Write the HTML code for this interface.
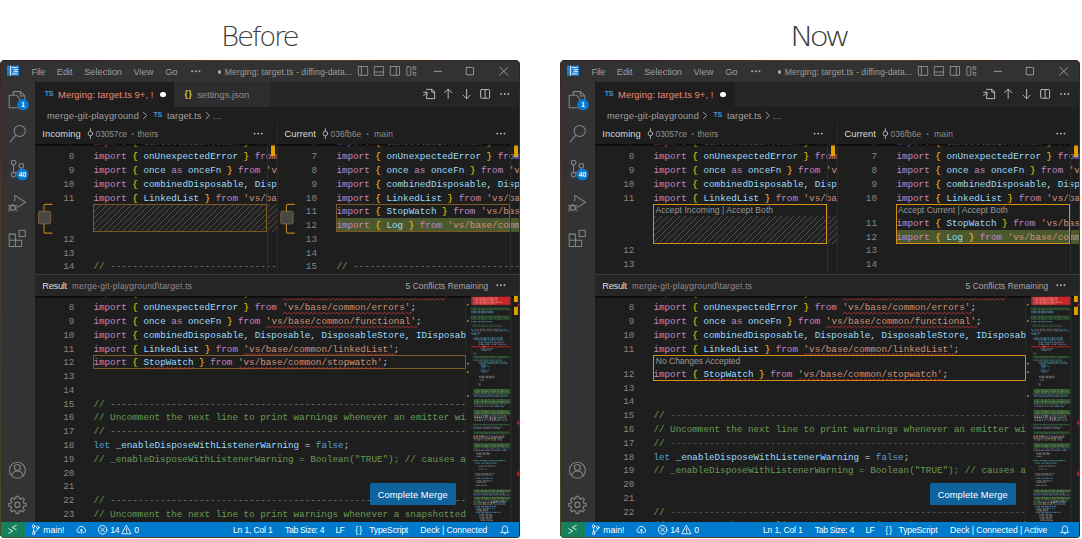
<!DOCTYPE html>
<html lang="en"><head><meta charset="utf-8"><title>Merge editor: Before / Now</title>
<style>
html,body{margin:0;padding:0}
body{width:1082px;height:539px;background:#fff;position:relative;overflow:hidden;font-family:"Liberation Sans",sans-serif}
.h{position:absolute;top:20.1px;line-height:34px;font-family:"DejaVu Sans Light","DejaVu Sans",sans-serif;font-weight:200;font-size:26.5px;color:#3c3c3c;transform-origin:0 50%;transform:scaleX(.86);white-space:pre}
.win{position:absolute;top:60.4px;width:519.6px;height:477.2px;background:#1e1e1e;overflow:hidden;border-radius:5px 5px 4px 4.5px}
.win div,.win svg{position:absolute}
.t{position:absolute;white-space:pre;line-height:14px}
.titlebar{left:0;top:0;width:100%;height:21.6px;background:#323233}
.actbar{left:0;top:21.6px;width:35px;height:441px;background:#333}
.tabsbar{left:35px;top:21.6px;right:0;height:25px;background:#252526}
.tab1{left:35px;top:21.6px;width:138.7px;height:25px;background:#1e1e1e}
.tab2{left:174.2px;top:21.6px;width:96px;height:25px;background:#2d2d2d}
.dot{width:5.6px;height:5.6px;border-radius:50%;background:#fff}
.pane{overflow:hidden}
.ln{left:0;width:100%;height:13.78px;line-height:13.78px;font-family:"Liberation Mono",monospace;font-size:9.282px;white-space:pre}
.ln b{position:absolute;left:0;top:0;text-align:right;color:#858585;font-weight:normal}
.ln pre{position:absolute;top:0;margin:0;font:inherit;color:#d4d4d4}
i{font-style:normal}
.k{color:#c586c0}.b{color:#ffd700}.v{color:#9cdcfe}.s{color:#ce9178}.p{color:#d4d4d4}.c{color:#6a9955}.l{color:#569cd6}.d{color:#5f8c4d}.now .d{color:#4c7040}
.hatch{background:repeating-linear-gradient(-45deg,#212121 0,#212121 3.4px,#4e4e4e 3.4px,#4e4e4e 4.24px);box-sizing:border-box}
.cbox{border:1px solid #d39014;box-sizing:border-box}
.cbox.dim{border-color:#7a5a22}
.olive{background:#4c592e}
.vline{width:1px;background:#303030}
.ymark{background:#e0a200}
.shadow{height:3px;background:linear-gradient(rgba(0,0,0,.8),rgba(0,0,0,.35) 50%,rgba(0,0,0,0))}
.reshead{left:35px;top:213.8px;right:0;height:21.6px;background:#252526;border-top:.8px solid #3c3c3c;box-sizing:border-box}
.btn{background:#0e639c;border-radius:1.5px}
.status{left:0;top:462px;width:100%;height:16px;background:#007acc}
.remote{left:0;top:462px;width:25.4px;height:16px;background:#16825d}
.edge-t{left:0;top:0;width:100%;height:.9px;background:linear-gradient(90deg,#2e1a18,#43241c 20%,#5e3a20 45%,#6e4a22 55%,#4b301c 75%,#2c2420)}
.edge-l{left:0;top:0;width:1.1px;height:100%;background:linear-gradient(#3a2420,#4e3a2a 30%,#45382c 60%,#4e462c)}
.edge-b{left:0;bottom:0;width:100%;height:.8px;background:linear-gradient(90deg,#5a4a2c,#4a3a24 40%,#5a4428 70%,#3a3024)}
.edge-r{right:0;top:0;width:.8px;height:100%;background:linear-gradient(#2c2420,#5a2c24 20%,#4a2a22 50%,#5a2420 75%,#3a2a22)}

</style></head><body>
<div class="h" style="left:221px;transform:scaleX(1.05);letter-spacing:-2.2px">Before</div>
<div class="h" style="left:790.2px;transform:scaleX(1.2);letter-spacing:-3.5px">Now</div>
<div class="win" style="left:0px"><div class="titlebar"></div><div class="actbar"></div><div class="tabsbar"></div><div class="tab1"></div><div class="tab2"></div><span class="t" style="left:31.50px;top:4.20px;font-size:9.3px;color:#9d9d9d;letter-spacing:-0.371px;">File</span><span class="t" style="left:56.80px;top:4.20px;font-size:9.3px;color:#9d9d9d;letter-spacing:-0.058px;">Edit</span><span class="t" style="left:84.20px;top:4.20px;font-size:9.3px;color:#9d9d9d;letter-spacing:-0.050px;">Selection</span><span class="t" style="left:133.60px;top:4.20px;font-size:9.3px;color:#9d9d9d;letter-spacing:-0.046px;">View</span><span class="t" style="left:165.20px;top:4.20px;font-size:9.3px;color:#9d9d9d;letter-spacing:-0.203px;">Go</span><div class="dot" style="left:218px;top:10.1px;width:3.4px;height:3.4px;background:#a6a6a6"></div><span class="t" style="left:224.80px;top:4.20px;font-size:8.6px;color:#9d9d9d;letter-spacing:0.096px;">Merging: target.ts - diffing-data...</span><span class="t" style="left:44.80px;top:26.70px;font-size:7px;color:#3d94d6;letter-spacing:-0.327px;font-weight:bold;">TS</span><span class="t" style="left:58.10px;top:27.30px;font-size:9.3px;color:#f48771;letter-spacing:0.084px;">Merging: target.ts 9+, !</span><div class="dot" style="left:160.3px;top:31.4px"></div><span class="t" style="left:184.60px;top:27.00px;font-size:8.5px;color:#cbcb41;letter-spacing:0.688px;font-weight:bold;">{}</span><span class="t" style="left:197.20px;top:27.30px;font-size:9.3px;color:#8f8f8f;letter-spacing:0.024px;">settings.json</span><span class="t" style="left:46.90px;top:48.40px;font-size:9.3px;color:#a0a0a0;letter-spacing:0.191px;">merge-git-playground</span><span class="t" style="left:153.60px;top:47.70px;font-size:7px;color:#3d94d6;letter-spacing:-0.327px;font-weight:bold;">TS</span><span class="t" style="left:167.00px;top:48.40px;font-size:9.3px;color:#a0a0a0;letter-spacing:0.101px;">target.ts</span><span class="t" style="left:212.80px;top:48.40px;font-size:9.3px;color:#a0a0a0;letter-spacing:-3.297px;">…</span><span class="t" style="left:42.30px;top:66.80px;font-size:9.3px;color:#dcdcdc;letter-spacing:0.108px;">Incoming</span><span class="t" style="left:95.60px;top:66.80px;font-size:8.4px;color:#8e8e8e;letter-spacing:-0.092px;">03057ce</span><span class="t" style="left:131.50px;top:66.80px;font-size:7px;color:#6e6e6e;">•</span><span class="t" style="left:137.40px;top:66.80px;font-size:8.4px;color:#8e8e8e;letter-spacing:0.086px;">theirs</span><span class="t" style="left:284.50px;top:66.80px;font-size:9.3px;color:#dcdcdc;letter-spacing:0.069px;">Current</span><span class="t" style="left:330.60px;top:66.80px;font-size:8.4px;color:#8e8e8e;letter-spacing:0.031px;">036fb6e</span><span class="t" style="left:366.30px;top:66.80px;font-size:7px;color:#6e6e6e;">•</span><span class="t" style="left:374.20px;top:66.80px;font-size:8.4px;color:#8e8e8e;letter-spacing:0.211px;">main</span><div class="pane" style="left:35px;top:83.2px;width:242.5px;height:130.7px"><div class="hatch" style="left:58px;top:60.83px;width:190px;height:27.56px"></div><div class="cbox dim" style="left:58px;top:60.83px;width:174.4px;height:27.56px"></div><div class="ln" style="top:-7.15px"><b style="width:39.40px">7</b><pre style="left:58.40px"><i class="k">import</i> <i class="b">{</i> <i class="v">CancellationToken</i> <i class="b">}</i> <i class="k">from</i> <i class="s">'vs/base/common/cancellation'</i><i class="p">;</i></pre></div><div class="ln" style="top:6.63px"><b style="width:39.40px">8</b><pre style="left:58.40px"><i class="k">import</i> <i class="b">{</i> <i class="v">onUnexpectedError</i> <i class="b">}</i> <i class="k">from</i> <i class="s">'vs/base/common/errors'</i><i class="p">;</i></pre></div><div class="ln" style="top:20.41px"><b style="width:39.40px">9</b><pre style="left:58.40px"><i class="k">import</i> <i class="b">{</i> <i class="v">once</i> <i class="k">as</i> <i class="v">onceFn</i> <i class="b">}</i> <i class="k">from</i> <i class="s">'vs/base/common/functional'</i><i class="p">;</i></pre></div><div class="ln" style="top:34.19px"><b style="width:39.40px">10</b><pre style="left:58.40px"><i class="k">import</i> <i class="b">{</i> <i class="v">combinedDisposable</i><i class="p">,</i> <i class="v">Disposable</i><i class="p">,</i> <i class="v">DisposableStore</i> <i class="b">}</i> <i class="k">from</i> <i class="s">'vs/base/common/lifecycle'</i><i class="p">;</i></pre></div><div class="ln" style="top:47.97px"><b style="width:39.40px">11</b><pre style="left:58.40px"><i class="k">import</i> <i class="b">{</i> <i class="v">LinkedList</i> <i class="b">}</i> <i class="k">from</i> <i class="s">'vs/base/common/linkedList'</i><i class="p">;</i></pre></div><div class="ln" style="top:89.31px"><b style="width:39.40px">12</b><pre style="left:58.40px"></pre></div><div class="ln" style="top:103.09px"><b style="width:39.40px">13</b><pre style="left:58.40px"></pre></div><div class="ln" style="top:116.87px"><b style="width:39.40px">14</b><pre style="left:58.40px"><i class="c">// </i><i class="d">----------------------------------------------------------------------------------------------------</i></pre></div></div><div class="pane" style="left:277.7px;top:83.2px;width:242px;height:130.7px"><div class="olive" style="left:58.3px;top:74.61px;width:190px;height:13.78px"></div><div class="cbox dim" style="left:58.3px;top:60.83px;width:174.5px;height:27.56px"></div><div class="ln" style="top:-7.15px"><b style="width:39.30px">6</b><pre style="left:58.70px"><i class="k">import</i> <i class="b">{</i> <i class="v">CancellationToken</i> <i class="b">}</i> <i class="k">from</i> <i class="s">'vs/base/common/cancellation'</i><i class="p">;</i></pre></div><div class="ln" style="top:6.63px"><b style="width:39.30px">7</b><pre style="left:58.70px"><i class="k">import</i> <i class="b">{</i> <i class="v">onUnexpectedError</i> <i class="b">}</i> <i class="k">from</i> <i class="s">'vs/base/common/errors'</i><i class="p">;</i></pre></div><div class="ln" style="top:20.41px"><b style="width:39.30px">8</b><pre style="left:58.70px"><i class="k">import</i> <i class="b">{</i> <i class="v">once</i> <i class="k">as</i> <i class="v">onceFn</i> <i class="b">}</i> <i class="k">from</i> <i class="s">'vs/base/common/functional'</i><i class="p">;</i></pre></div><div class="ln" style="top:34.19px"><b style="width:39.30px">9</b><pre style="left:58.70px"><i class="k">import</i> <i class="b">{</i> <i class="v">combinedDisposable</i><i class="p">,</i> <i class="v">Disposable</i><i class="p">,</i> <i class="v">DisposableStore</i> <i class="b">}</i> <i class="k">from</i> <i class="s">'vs/base/common/lifecycle'</i><i class="p">;</i></pre></div><div class="ln" style="top:47.97px"><b style="width:39.30px">10</b><pre style="left:58.70px"><i class="k">import</i> <i class="b">{</i> <i class="v">LinkedList</i> <i class="b">}</i> <i class="k">from</i> <i class="s">'vs/base/common/linkedList'</i><i class="p">;</i></pre></div><div class="ln" style="top:61.75px"><b style="width:39.30px">11</b><pre style="left:58.70px"><i class="k">import</i> <i class="b">{</i> <i class="v">StopWatch</i> <i class="b">}</i> <i class="k">from</i> <i class="s">'vs/base/common/stopwatch'</i><i class="p">;</i></pre></div><div class="ln" style="top:75.53px"><b style="width:39.30px">12</b><pre style="left:58.70px"><i class="k">import</i> <i class="b">{</i> <i class="v">Log</i> <i class="b">}</i> <i class="k">from</i> <i class="s">'vs/base/common/log'</i><i class="p">;</i></pre></div><div class="ln" style="top:89.31px"><b style="width:39.30px">13</b><pre style="left:58.70px"></pre></div><div class="ln" style="top:103.09px"><b style="width:39.30px">14</b><pre style="left:58.70px"></pre></div><div class="ln" style="top:116.87px"><b style="width:39.30px">15</b><pre style="left:58.70px"><i class="c">// </i><i class="d">----------------------------------------------------------------------------------------------------</i></pre></div></div><div class="vline" style="left:267.2px;top:83.2px;height:130.7px;background:#2d2d2d"></div><div class="vline" style="left:510.4px;top:83.2px;height:130.7px;background:#2d2d2d"></div><div class="vline" style="left:465.4px;top:235.3px;height:226.7px;background:#292929"></div><div class="vline" style="left:277.2px;top:62.8px;height:151.1px;background:#2b2b2b"></div><div class="ymark" style="left:270.6px;top:84.2px;width:4.6px;height:11.3px"></div><div class="ymark" style="left:514px;top:84.2px;width:4.4px;height:12px"></div><div class="shadow" style="left:35px;top:83.2px;width:485px;height:3.5px"></div><div class="reshead"></div><span class="t" style="left:42.30px;top:218.30px;font-size:9.3px;color:#dcdcdc;letter-spacing:-0.293px;">Result</span><span class="t" style="left:72.00px;top:218.30px;font-size:8.4px;color:#8e8e8e;letter-spacing:0.270px;">merge-git-playground\target.ts</span><span class="t" style="left:405.60px;top:218.30px;font-size:8.4px;color:#a6a6a6;letter-spacing:0.059px;">5 Conflicts Remaining</span><div class="pane" style="left:35px;top:235.3px;width:430.5px;height:226.7px"><div class="cbox dim" style="left:58px;top:59.68px;width:372.6px;height:13.78px"></div><div class="ln" style="top:-8.30px"><b style="width:39.40px">7</b><pre style="left:58.40px"><i class="k">import</i> <i class="b">{</i> <i class="v">CancellationToken</i> <i class="b">}</i> <i class="k">from</i> <i class="s">'vs/base/common/cancellation'</i><i class="p">;</i></pre></div><div class="ln" style="top:5.48px"><b style="width:39.40px">8</b><pre style="left:58.40px"><i class="k">import</i> <i class="b">{</i> <i class="v">onUnexpectedError</i> <i class="b">}</i> <i class="k">from</i> <i class="s">'vs/base/common/errors'</i><i class="p">;</i></pre></div><div class="ln" style="top:19.26px"><b style="width:39.40px">9</b><pre style="left:58.40px"><i class="k">import</i> <i class="b">{</i> <i class="v">once</i> <i class="k">as</i> <i class="v">onceFn</i> <i class="b">}</i> <i class="k">from</i> <i class="s">'vs/base/common/functional'</i><i class="p">;</i></pre></div><div class="ln" style="top:33.04px"><b style="width:39.40px">10</b><pre style="left:58.40px"><i class="k">import</i> <i class="b">{</i> <i class="v">combinedDisposable</i><i class="p">,</i> <i class="v">Disposable</i><i class="p">,</i> <i class="v">DisposableStore</i><i class="p">,</i> <i class="v">IDisposable</i><i class="p">,</i> <i class="v">MutableDisposable</i> <i class="b">}</i> <i class="k">from</i> <i class="s">'vs/base/common/lifecycle'</i><i class="p">;</i></pre></div><div class="ln" style="top:46.82px"><b style="width:39.40px">11</b><pre style="left:58.40px"><i class="k">import</i> <i class="b">{</i> <i class="v">LinkedList</i> <i class="b">}</i> <i class="k">from</i> <i class="s">'vs/base/common/linkedList'</i><i class="p">;</i></pre></div><div class="ln" style="top:60.60px"><b style="width:39.40px">12</b><pre style="left:58.40px"><i class="k">import</i> <i class="b">{</i> <i class="v">StopWatch</i> <i class="b">}</i> <i class="k">from</i> <i class="s">'vs/base/common/stopwatch'</i><i class="p">;</i></pre></div><div class="ln" style="top:74.38px"><b style="width:39.40px">13</b><pre style="left:58.40px"></pre></div><div class="ln" style="top:88.16px"><b style="width:39.40px">14</b><pre style="left:58.40px"></pre></div><div class="ln" style="top:101.94px"><b style="width:39.40px">15</b><pre style="left:58.40px"><i class="c">// </i><i class="d">----------------------------------------------------------------------------------------------------</i></pre></div><div class="ln" style="top:115.72px"><b style="width:39.40px">16</b><pre style="left:58.40px"><i class="c">// Uncomment the next line to print warnings whenever an emitter with listeners is disposed.</i></pre></div><div class="ln" style="top:129.50px"><b style="width:39.40px">17</b><pre style="left:58.40px"><i class="c">// </i><i class="d">----------------------------------------------------------------------------------------------------</i></pre></div><div class="ln" style="top:143.28px"><b style="width:39.40px">18</b><pre style="left:58.40px"><i class="l">let</i> <i class="v">_enableDisposeWithListenerWarning</i> <i class="p">=</i> <i class="l">false</i><i class="p">;</i></pre></div><div class="ln" style="top:157.06px"><b style="width:39.40px">19</b><pre style="left:58.40px"><i class="c">// _enableDisposeWithListenerWarning = Boolean("TRUE"); // causes a linter warning</i></pre></div><div class="ln" style="top:170.84px"><b style="width:39.40px">20</b><pre style="left:58.40px"></pre></div><div class="ln" style="top:184.62px"><b style="width:39.40px">21</b><pre style="left:58.40px"></pre></div><div class="ln" style="top:198.40px"><b style="width:39.40px">22</b><pre style="left:58.40px"><i class="c">// </i><i class="d">----------------------------------------------------------------------------------------------------</i></pre></div><div class="ln" style="top:212.18px"><b style="width:39.40px">23</b><pre style="left:58.40px"><i class="c">// Uncomment the next line to print warnings whenever a snapshotted event listener list grows</i></pre></div></div><svg width="520" height="478" viewBox="0 0 520 478" style="left:0;top:0"><clipPath id="c3018"><rect x="35" y="235.3" width="430.5" height="230"/></clipPath><path clip-path="url(#c3018)" d="M282.8 240.3L284.9 238.4L287.1 240.3L289.3 238.4L291.5 240.3L293.6 238.4L295.8 240.3L298.0 238.4L300.1 240.3L302.3 238.4L304.5 240.3L306.7 238.4L308.8 240.3L311.0 238.4L313.2 240.3L315.3 238.4L317.5 240.3L319.7 238.4L321.8 240.3L324.0 238.4L326.2 240.3L328.4 238.4L330.5 240.3L332.7 238.4L334.9 240.3L337.0 238.4L339.2 240.3L341.4 238.4L343.5 240.3L345.7 238.4L347.9 240.3L350.1 238.4L352.2 240.3L354.4 238.4L356.6 240.3L358.7 238.4L360.9 240.3L363.1 238.4L365.2 240.3L367.4 238.4L369.6 240.3L371.8 238.4L373.9 240.3L376.1 238.4L378.3 240.3L380.4 238.4L382.6 240.3L384.8 238.4L386.9 240.3L389.1 238.4L391.3 240.3L393.5 238.4L395.6 240.3L397.8 238.4L400.0 240.3L402.1 238.4L404.3 240.3L406.5 238.4L408.6 240.3L410.8 238.4L413.0 240.3L415.2 238.4L417.3 240.3L419.5 238.4L421.7 240.3L423.8 238.4L426.0 240.3L428.2 238.4L430.3 240.3L432.5 238.4L434.7 240.3L436.9 238.4L439.0 240.3L441.2 238.4L443.4 240.3L444.3 238.4M282.8 254.1L284.9 252.2L287.1 254.1L289.3 252.2L291.5 254.1L293.6 252.2L295.8 254.1L298.0 252.2L300.1 254.1L302.3 252.2L304.5 254.1L306.7 252.2L308.8 254.1L311.0 252.2L313.2 254.1L315.3 252.2L317.5 254.1L319.7 252.2L321.8 254.1L324.0 252.2L326.2 254.1L328.4 252.2L330.5 254.1L332.7 252.2L334.9 254.1L337.0 252.2L339.2 254.1L341.4 252.2L343.5 254.1L345.7 252.2L347.9 254.1L350.1 252.2L352.2 254.1L354.4 252.2L356.6 254.1L358.7 252.2L360.9 254.1L363.1 252.2L365.2 254.1L367.4 252.2L369.6 254.1L371.8 252.2L373.9 254.1L376.1 252.2L378.3 254.1L380.4 252.2L382.6 254.1L384.8 252.2L386.9 254.1L389.1 252.2L391.3 254.1L393.5 252.2L395.6 254.1L397.8 252.2L400.0 254.1L402.1 252.2L404.3 254.1L406.5 252.2L408.6 254.1L410.8 252.2L410.9 254.1M266.1 267.9L268.2 266.0L270.4 267.9L272.6 266.0L274.8 267.9L276.9 266.0L279.1 267.9L281.3 266.0L283.4 267.9L285.6 266.0L287.8 267.9L289.9 266.0L292.1 267.9L294.3 266.0L296.5 267.9L298.6 266.0L300.8 267.9L303.0 266.0L305.1 267.9L307.3 266.0L309.5 267.9L311.6 266.0L313.8 267.9L316.0 266.0L318.2 267.9L320.3 266.0L322.5 267.9L324.7 266.0L326.8 267.9L329.0 266.0L331.2 267.9L333.3 266.0L335.5 267.9L337.7 266.0L339.9 267.9L342.0 266.0L344.2 267.9L346.4 266.0L348.5 267.9L350.7 266.0L352.9 267.9L355.0 266.0L357.2 267.9L359.4 266.0L361.6 267.9L363.7 266.0L365.9 267.9L368.1 266.0L370.2 267.9L372.4 266.0L374.6 267.9L376.7 266.0L378.9 267.9L381.1 266.0L383.3 267.9L385.4 266.0L387.6 267.9L389.8 266.0L391.9 267.9L394.1 266.0L396.3 267.9L398.4 266.0L400.6 267.9L402.8 266.0L405.0 267.9L407.1 266.0L409.3 267.9L411.5 266.0L413.6 267.9L415.8 266.0L416.5 267.9M243.8 295.4L246.0 293.5L248.1 295.4L250.3 293.5L252.5 295.4L254.6 293.5L256.8 295.4L259.0 293.5L261.1 295.4L263.3 293.5L265.5 295.4L267.7 293.5L269.8 295.4L272.0 293.5L274.2 295.4L276.3 293.5L278.5 295.4L280.7 293.5L282.9 295.4L285.0 293.5L287.2 295.4L289.4 293.5L291.5 295.4L293.7 293.5L295.9 295.4L298.0 293.5L300.2 295.4L302.4 293.5L304.6 295.4L306.7 293.5L308.9 295.4L311.1 293.5L313.2 295.4L315.4 293.5L317.6 295.4L319.7 293.5L321.9 295.4L324.1 293.5L326.3 295.4L328.4 293.5L330.6 295.4L332.8 293.5L334.9 295.4L337.1 293.5L339.3 295.4L341.4 293.5L343.6 295.4L345.8 293.5L348.0 295.4L350.1 293.5L352.3 295.4L354.5 293.5L356.6 295.4L358.8 293.5L361.0 295.4L363.1 293.5L365.3 295.4L367.5 293.5L369.7 295.4L371.8 293.5L374.0 295.4L376.2 293.5L378.3 295.4L380.5 293.5L382.7 295.4L384.8 293.5L387.0 295.4L389.2 293.5L391.4 295.4L393.5 293.5L394.2 295.4M143.5 309.2L145.7 307.3L147.9 309.2L150.0 307.3L152.2 309.2L154.4 307.3L156.5 309.2L158.7 307.3L160.9 309.2L163.1 307.3L165.2 309.2L167.4 307.3L169.6 309.2L171.7 307.3L173.9 309.2L176.1 307.3L178.2 309.2L180.4 307.3L182.6 309.2L184.8 307.3L186.9 309.2L189.1 307.3L191.3 309.2L193.4 307.3L193.7 309.2M238.2 309.2L240.4 307.3L242.6 309.2L244.7 307.3L246.9 309.2L249.1 307.3L251.2 309.2L253.4 307.3L255.6 309.2L257.7 307.3L259.9 309.2L262.1 307.3L264.3 309.2L266.4 307.3L268.6 309.2L270.8 307.3L272.9 309.2L275.1 307.3L277.3 309.2L279.5 307.3L281.6 309.2L283.8 307.3L286.0 309.2L288.1 307.3L290.3 309.2L292.5 307.3L294.6 309.2L296.8 307.3L299.0 309.2L301.2 307.3L303.3 309.2L305.5 307.3L307.7 309.2L309.8 307.3L312.0 309.2L314.2 307.3L316.3 309.2L318.5 307.3L320.7 309.2L322.9 307.3L325.0 309.2L327.2 307.3L329.4 309.2L331.5 307.3L333.7 309.2L335.9 307.3L338.0 309.2L340.2 307.3L342.4 309.2L344.6 307.3L346.7 309.2L348.9 307.3L351.1 309.2L353.2 307.3L355.4 309.2L357.6 307.3L359.7 309.2L361.9 307.3L364.1 309.2L366.3 307.3L368.4 309.2L370.6 307.3L372.8 309.2L374.9 307.3L377.1 309.2L379.3 307.3L381.4 309.2L383.0 307.3" fill="none" stroke="#d8403c" stroke-width=".75" opacity=".9" stroke-linejoin="round"/></svg><div class="shadow" style="left:35px;top:235.3px;width:485px;height:3.5px"></div><svg width="520" height="478" viewBox="0 0 520 478" style="left:0;top:0"><rect x="471.0" y="236.5" width="39.4" height="8.8" fill="#8c2226"/><rect x="476.2" y="236.8" width="34.2" height="7.6" fill="#c42828"/><rect x="470.5" y="247.4" width="40.1" height="1.6" fill="#21332a"/><rect x="470.5" y="248.7" width="40.1" height="1.6" fill="#21332a"/><rect x="470.5" y="255.5" width="40.1" height="1.6" fill="#21332a"/><rect x="470.5" y="256.9" width="40.1" height="1.6" fill="#21332a"/><rect x="470.5" y="258.3" width="40.1" height="1.6" fill="#21332a"/><rect x="472.6" y="295.7" width="37.2" height="1.6" fill="#21332a"/><rect x="472.6" y="296.8" width="37.2" height="1.6" fill="#21332a"/><rect x="473.4" y="329.0" width="37.2" height="1.6" fill="#293f2c"/><rect x="473.4" y="330.5" width="37.2" height="1.6" fill="#293f2c"/><rect x="473.4" y="332.0" width="37.2" height="1.6" fill="#293f2c"/><rect x="473.4" y="339.2" width="37.2" height="1.6" fill="#293f2c"/><rect x="473.4" y="340.6" width="37.2" height="1.6" fill="#293f2c"/><rect x="473.4" y="342.1" width="37.2" height="1.6" fill="#293f2c"/><rect x="473.4" y="350.0" width="37.2" height="1.6" fill="#293f2c"/><rect x="473.4" y="351.5" width="37.2" height="1.6" fill="#293f2c"/><rect x="473.4" y="353.0" width="37.2" height="1.6" fill="#293f2c"/><rect x="472.6" y="363.8" width="37.9" height="1.6" fill="#21332a"/><rect x="473.4" y="371.4" width="36.5" height="1.6" fill="#21332a"/><rect x="473.4" y="372.6" width="36.5" height="1.6" fill="#21332a"/><rect x="473.4" y="383.3" width="37.2" height="1.6" fill="#293f2c"/><rect x="473.4" y="384.7" width="37.2" height="1.6" fill="#293f2c"/><rect x="473.4" y="386.1" width="37.2" height="1.6" fill="#293f2c"/><rect x="473.4" y="429.5" width="37.2" height="1.6" fill="#293f2c"/><rect x="473.4" y="431.0" width="37.2" height="1.6" fill="#293f2c"/><rect x="473.4" y="436.7" width="37.2" height="1.6" fill="#293f2c"/><rect x="473.4" y="438.1" width="37.2" height="1.6" fill="#293f2c"/><rect x="471.0" y="285.9" width="39.4" height="1.5" fill="#8a1f24"/><rect x="482.5" y="285.8" width="3.0" height="1.6" fill="#e04848"/><path d="M471.1 248.2h38.4M472.4 249.6h37.6M471.1 256.3h38.5M471.1 257.7h38.8M471.5 259.1h37.7M471.1 265.0h31.0M472.3 266.5h29.8M473.2 296.6h35.2M474.5 297.7h34.7M473.2 364.6h36.0M474.0 372.2h34.8M474.5 373.4h34.5" stroke="#416d3b" stroke-width="1.2" opacity="0.65" fill="none" stroke-dasharray="1.4 .6 2.9 .7 .7 .6 2.2 .7 3.6 .7 1.4 .7"/><path d="M474.0 329.9h35.4M474.9 331.4h34.5M474.0 332.9h36.0M474.0 340.0h35.6M474.5 341.5h34.8M474.0 342.9h36.1M474.0 350.9h35.3M475.3 352.4h34.0M474.0 353.9h36.0M474.0 384.1h35.7M475.0 385.5h34.5M474.7 386.9h34.7M474.0 430.3h36.2M474.2 431.8h35.3M474.0 437.5h36.1M475.2 438.9h34.2" stroke="#5f8c55" stroke-width="1.2" opacity="0.72" fill="none" stroke-dasharray="1.4 .6 2.9 .7 .7 .6 2.2 .7 3.6 .7 1.4 .7"/><path d="M471.1 251.4h23.2M471.4 252.7h22.4M471.1 261.6h21.5M471.1 269.4h2.1M474.3 269.4h1.5M477.0 269.4h2.2M486.8 269.4h4.3M497.5 269.4h3.1M505.1 269.4h1.3M498.1 270.9h5.8M471.1 273.2h9.5M471.9 274.5h6.7M473.2 277.9h29.6M473.7 279.4h28.8M487.9 281.0h4.7M493.2 281.0h2.9M502.4 281.0h1.1M478.4 282.7h5.7M489.6 282.7h3.4M473.2 300.1h28.9M498.2 303.4h3.3M480.5 304.9h7.0M481.3 306.4h8.3M481.7 307.9h3.3M480.5 310.4h8.7M481.5 311.9h6.2M479.7 320.1h4.5M473.2 334.9h4.4M481.4 334.9h3.6M485.6 334.9h5.5M491.7 334.9h2.3M473.8 336.4h3.3M478.1 336.4h4.0M490.3 336.4h3.1M500.1 336.4h3.6M504.6 336.4h3.9M474.0 345.0h4.3M485.0 345.0h3.4M493.6 345.0h5.8M474.4 346.5h2.1M482.0 346.5h1.7M491.1 355.9h4.6M496.8 355.9h4.0M479.2 358.8h1.8M481.6 358.8h1.9M497.2 358.8h4.7M481.7 360.3h1.8M473.2 367.2h2.5M480.0 367.2h2.1M492.7 367.2h4.1M482.3 368.3h2.5M486.4 376.1h2.3M489.2 376.1h1.6M485.1 377.4h2.7M488.9 377.4h4.5M476.8 378.7h6.0M483.3 378.7h1.6M497.0 378.7h5.0M481.2 380.0h2.3M479.1 389.0h1.7M489.1 389.0h5.7M495.2 389.0h5.9M502.1 389.0h5.4M484.5 390.5h5.2M498.8 390.5h2.1M475.4 403.2h22.0M475.4 418.4h17.8M473.2 433.8h1.6M488.8 433.8h4.0M503.0 433.8h1.7M473.7 434.9h4.1M481.7 434.9h4.3M493.0 434.9h2.9M500.6 434.9h4.5M487.8 441.1h4.9M474.5 442.6h1.7M495.9 442.6h4.6M501.3 442.6h4.1M493.9 444.1h1.8M500.3 444.1h5.0M475.4 446.4h21.2M475.5 448.2h19.4M475.4 452.4h24.9" stroke="#4f86ad" stroke-width="1.2" opacity="0.7" fill="none" stroke-dasharray="1.4 .6 2.9 .7 .7 .6 2.2 .7 3.6 .7 1.4 .7"/><path d="M501.8 269.4h2.7M472.1 270.9h3.1M479.7 270.9h2.3M481.6 281.0h5.6M484.7 282.7h4.2M479.0 284.4h5.3M498.6 284.4h4.6M483.0 301.9h5.0M488.9 301.9h4.5M494.1 301.9h4.7M503.5 301.9h2.8M479.2 303.4h4.0M483.8 303.4h2.7M487.6 303.4h4.4M502.7 303.4h4.6M494.9 334.9h3.4M503.8 334.9h3.7M482.9 336.4h2.9M500.3 345.0h2.7M503.8 345.0h2.2M490.7 346.5h2.6M494.4 346.5h4.7M488.6 355.9h1.7M497.4 357.4h5.0M495.4 360.3h5.7M502.3 360.3h2.1M476.6 367.2h2.6M494.8 368.3h5.3M474.6 380.0h3.4M508.3 389.0h1.5M473.2 400.6h32.7M479.3 433.8h2.9M493.3 433.8h5.9M475.3 441.1h4.7M480.7 441.1h2.5M505.4 441.1h2.7M476.9 442.6h4.9" stroke="#3f9a8a" stroke-width="1.2" opacity="0.7" fill="none" stroke-dasharray="1.4 .6 2.9 .7 .7 .6 2.2 .7 3.6 .7 1.4 .7"/><path d="M492.3 269.4h4.6M476.0 270.9h2.9M504.4 270.9h2.6M494.2 282.7h4.4M502.5 282.7h2.1M491.5 284.4h5.9M503.9 284.4h2.8M478.3 323.9h2.5M478.9 325.0h2.1M477.1 346.5h4.3M487.1 346.5h2.6M499.8 346.5h4.0M478.6 355.9h3.9M482.9 357.4h5.5M486.8 358.8h1.8M503.1 358.8h3.8M484.3 360.3h2.0M487.5 360.3h2.1M490.0 360.3h4.6M483.2 367.2h3.5M500.1 367.2h1.7M476.1 368.3h5.3M485.3 368.3h5.6M491.4 376.1h3.7M496.0 376.1h3.1M476.6 377.4h3.2M490.9 378.7h2.9M497.3 380.0h5.3M473.2 389.0h5.3M490.5 390.5h2.1M493.1 390.5h5.0M501.6 390.5h4.6M475.4 425.3h11.5M475.8 433.8h2.7M486.8 434.9h5.7M496.7 434.9h3.5M486.3 442.6h3.6" stroke="#94609a" stroke-width="1.2" opacity="0.75" fill="none" stroke-dasharray="1.4 .6 2.9 .7 .7 .6 2.2 .7 3.6 .7 1.4 .7"/><path d="M473.2 355.9h4.7M501.5 355.9h5.1M491.7 357.4h5.0M502.9 357.4h3.5M474.7 358.8h3.4M474.2 360.3h2.2M504.9 360.3h2.7M484.1 376.1h1.7M499.9 376.1h5.5M480.9 377.4h3.6M484.3 380.0h6.0M473.2 441.1h1.5M484.2 441.1h2.9M473.3 444.1h4.2M496.7 444.1h3.1" stroke="#a4735a" stroke-width="1.2" opacity="0.7" fill="none" stroke-dasharray="1.4 .6 2.9 .7 .7 .6 2.2 .7 3.6 .7 1.4 .7"/><path d="M479.9 269.4h5.8M483.2 270.9h1.6M485.5 270.9h3.3M489.8 270.9h3.1M494.0 270.9h3.5M507.7 270.9h2.0M478.3 281.0h2.4M497.2 281.0h4.3M499.2 282.7h2.4M484.8 284.4h5.6M480.5 288.9h12.3M481.7 290.4h8.6M473.2 293.3h3.3M478.3 301.9h4.0M499.9 301.9h2.7M492.7 303.4h4.4M479.0 316.3h15.9M479.3 317.6h15.3M478.7 334.9h2.3M499.0 334.9h4.3M486.6 336.4h3.0M494.1 336.4h5.2M478.9 345.0h5.4M489.3 345.0h3.7M484.7 346.5h1.6M487.3 367.2h4.7M497.2 367.2h2.1M473.7 368.3h1.6M492.0 368.3h2.1M482.0 389.0h2.4M485.2 389.0h3.3M474.1 390.5h4.3M478.8 390.5h4.9M476.1 393.2h13.4M476.5 394.2h14.0M476.1 396.4h7.2M478.3 406.1h18.6M478.3 409.0h8.4M474.7 413.6h19.8M475.8 415.1h16.8M476.1 420.9h15.9M476.6 422.4h9.8M482.8 433.8h2.7M486.2 433.8h1.7M499.9 433.8h2.7M478.8 434.9h1.9M505.9 434.9h3.5M476.1 449.7h12.4M477.3 450.8h10.5M479.0 454.2h12.5M479.4 455.7h13.4M479.1 457.3h13.5M480.0 458.9h11.3M480.4 460.4h12.6" stroke="#8c8c8c" stroke-width="1.2" opacity="0.6" fill="none" stroke-dasharray="1.4 .6 2.9 .7 .7 .6 2.2 .7 3.6 .7 1.4 .7"/><path d="M484.4 358.8h1.6M476.9 360.3h4.0M473.2 376.1h5.2M473.7 377.4h2.4M496.5 377.4h5.7M473.4 378.7h2.8M485.9 378.7h4.3M494.4 378.7h1.8M491.1 380.0h5.7M478.2 444.1h3.6M487.4 444.1h5.7" stroke="#a89a3a" stroke-width="1.2" opacity="0.7" fill="none" stroke-dasharray="1.4 .6 2.9 .7 .7 .6 2.2 .7 3.6 .7 1.4 .7"/><path d="M471.8 237.9h26.7M472.9 239.4h24.5M473.2 240.9h24.5M473.2 242.4h28.8M472.5 243.9h24.0" stroke="#f29090" stroke-width="1.2" opacity="0.6" fill="none" stroke-dasharray="1.4 .6 2.9 .7 .7 .6 2.2 .7 3.6 .7 1.4 .7"/><path d="M483.1 355.9h4.6M474.3 357.4h3.7M478.7 357.4h3.3M489.5 357.4h1.8M489.5 358.8h1.7M491.7 358.8h4.3M479.1 376.1h4.3M494.2 377.4h1.6M502.6 377.4h1.1M478.5 380.0h1.8M493.4 441.1h5.1M499.7 441.1h5.3M482.9 442.6h2.4M491.0 442.6h4.3M482.8 444.1h3.5" stroke="#c8c8c8" stroke-width="1.2" opacity="0.7" fill="none" stroke-dasharray="1.4 .6 2.9 .7 .7 .6 2.2 .7 3.6 .7 1.4 .7"/><rect x="467.1" y="243.9" width="1.5" height="1.5" fill="#c9a227"/><rect x="467.1" y="260.3" width="1.5" height="1.5" fill="#c9a227"/><rect x="467.1" y="302.9" width="1.5" height="1.5" fill="#c9a227"/><rect x="467.1" y="311.5" width="1.5" height="1.5" fill="#c9a227"/><rect x="467.1" y="335.4" width="1.5" height="1.5" fill="#c9a227"/><rect x="510.600" y="235.300" width=".8" height="226.700" fill="#333"/><rect x="514" y="235.9" width="3.900" height="6.100" fill="#e0a200"/><rect x="514" y="246.8" width="3.900" height="8.200" fill="#e0a200"/><rect x="517.800" y="243.9" width="1.400" height="2.200" fill="#c8262c"/><rect x="517.400" y="361.0" width="2" height="3.600" fill="#d3212a"/><rect x="517.400" y="411.5" width="2" height="4.300" fill="#d3212a"/></svg><div class="btn" style="left:370.2px;top:422.4px;width:85.6px;height:22.1px"></div><span class="t" style="left:377.70px;top:427.30px;font-size:9.3px;color:#fff;letter-spacing:0.090px;">Complete Merge</span><div class="status"></div><div class="remote"></div><span class="t" style="left:43.20px;top:463.00px;font-size:8.6px;color:#fff;letter-spacing:0.057px;">main!</span><span class="t" style="left:110.30px;top:463.00px;font-size:8.6px;color:#fff;letter-spacing:-0.381px;">14</span><span class="t" style="left:134.30px;top:463.00px;font-size:8.6px;color:#fff;letter-spacing:-0.181px;">0</span><span class="t" style="left:233.00px;top:463.00px;font-size:8.6px;color:#fff;letter-spacing:-0.171px;">Ln 1, Col 1</span><span class="t" style="left:285.00px;top:463.00px;font-size:8.6px;color:#fff;letter-spacing:-0.292px;">Tab Size: 4</span><span class="t" style="left:335.50px;top:463.00px;font-size:8.6px;color:#fff;letter-spacing:-0.716px;">LF</span><span class="t" style="left:355.30px;top:462.70px;font-size:8.6px;color:#fff;letter-spacing:1.125px;">{}</span><span class="t" style="left:369.20px;top:463.00px;font-size:8.6px;color:#fff;letter-spacing:-0.181px;">TypeScript</span><span class="t" style="left:420.30px;top:463.00px;font-size:8.6px;color:#fff;letter-spacing:-0.072px;">Deck | Connected</span><svg width="520" height="478" viewBox="0 0 520 478" style="left:0;top:0" fill="none" stroke-linecap="round" stroke-linejoin="round"><rect x="7" y="5.6" width="12" height="10.2" fill="#1a7fd4" stroke="none"/><path d="M10.6 6.2v9M12.4 7.6h4.6M14 9.7h3.6M14 11.7h3.6M12.4 13.8h4.6" stroke="#eaf3fb" stroke-width="1"/><g stroke="#979797" stroke-width=".85"><rect x="358.400" y="6.500" width="9.300" height="8.800" rx=".3"/><path d="M361.400 6.500v8.800"/><rect x="374.300" y="6.500" width="9.300" height="8.800" rx=".3"/><path d="M374.300 12h9.300"/><rect x="390.200" y="6.500" width="9.300" height="8.800" rx=".3"/><path d="M396.300 6.500v8.800"/><rect x="406.8" y="6.8" width="4" height="8.6" rx=".6"/><rect x="413" y="6.8" width="2.8" height="2.8" rx=".5"/><rect x="413" y="12.4" width="2.8" height="2.8" rx=".5"/></g><g stroke="#b4b4b4" stroke-width=".8"><path d="M434.2 11.4h7.4"/><rect x="466.2" y="7.4" width="7.4" height="7.4" rx=".8"/><path d="M499.8 7.2l8 8M507.8 7.2l-8 8"/></g><g stroke="#c5c5c5" stroke-width=".9"><path d="M426.6 29.4h5.4l2.6 2.6v6.6h-8v-3.6"/><path d="M431.8 29.4v2.8h2.8"/><path d="M423.6 32.2h3.4v2.6M427 32.2l-3.4 3.6"/><path d="M448.2 38.4v-9M444.6 32.6l3.6-3.6 3.6 3.6"/><path d="M466.6 29.4v9M463 35.2l3.6 3.6 3.6-3.6"/><rect x="480.6" y="29.6" width="9" height="8.6" rx=".8"/><path d="M485.1 29.6v8.6"/></g><circle cx="501.2" cy="33.9" r="0.9" fill="#c5c5c5" stroke="none"/><circle cx="504.8" cy="33.9" r="0.9" fill="#c5c5c5" stroke="none"/><circle cx="508.4" cy="33.9" r="0.9" fill="#c5c5c5" stroke="none"/><circle cx="254.6" cy="73.6" r="0.9" fill="#c5c5c5" stroke="none"/><circle cx="258.2" cy="73.6" r="0.9" fill="#c5c5c5" stroke="none"/><circle cx="261.8" cy="73.6" r="0.9" fill="#c5c5c5" stroke="none"/><circle cx="497.2" cy="73.6" r="0.9" fill="#c5c5c5" stroke="none"/><circle cx="500.8" cy="73.6" r="0.9" fill="#c5c5c5" stroke="none"/><circle cx="504.4" cy="73.6" r="0.9" fill="#c5c5c5" stroke="none"/><circle cx="497.2" cy="225.2" r="0.9" fill="#c5c5c5" stroke="none"/><circle cx="500.8" cy="225.2" r="0.9" fill="#c5c5c5" stroke="none"/><circle cx="504.4" cy="225.2" r="0.9" fill="#c5c5c5" stroke="none"/><circle cx="192.2" cy="11.2" r="1.05" fill="#a6a6a6" stroke="none"/><circle cx="195.8" cy="11.2" r="1.05" fill="#a6a6a6" stroke="none"/><circle cx="199.4" cy="11.2" r="1.05" fill="#a6a6a6" stroke="none"/><g stroke="#a8a8a8" stroke-width=".95"><path d="M143.400 52.200l3.300 3.300-3.300 3.300M206 52.200l3.300 3.300-3.300 3.300"/></g><g stroke="#c5c5c5" stroke-width=".8"><circle cx="90.4" cy="73.6" r="2.3"/><path d="M90.4 68.6v2.7M90.4 75.9v2.7"/><circle cx="325.4" cy="73.6" r="2.3"/><path d="M325.4 68.6v2.7M325.4 75.9v2.7"/></g><g stroke="#858585" stroke-width="1.05"><path d="M13.2 34.8v-3.2h7.4l4.2 4.2v8.4h-5"/><path d="M20.4 31.8v4.2h4.2"/><path d="M9.2 35.2h7.2l3.2 3.2v9.4h-10.4z" /><circle cx="19.7" cy="71" r="5.6"/><path d="M15.8 75.2l-5.6 6.6"/><circle cx="13.6" cy="102.6" r="2.3"/><circle cx="21.4" cy="105.8" r="2.3"/><circle cx="13.6" cy="114.6" r="2.3"/><path d="M13.6 105v7.2M21.4 108.2c0 3.4-3 4-5.6 5"/><path d="M14.800 141v-5.600l10.600 6.800-7.600 4.900"/><ellipse cx="12.800" cy="147.600" rx="2.300" ry="2.900"/><path d="M10.800 145.600h4M8.600 145.200l1.900 1.200M8.400 148h2.100M8.600 150.800l1.900-1.200M17 145.200l-1.900 1.200M17.200 148h-2.100M17 150.800l-1.900-1.200"/><path d="M9.200 174.100h6.200v6.200h6.200v6.200h-12.400zM9.200 180.300h6.200v6.200"/><rect x="19.100" y="170.200" width="6.200" height="6.200" rx=".5"/><circle cx="17.4" cy="410.2" r="8"/><circle cx="17.4" cy="407.4" r="3"/><path d="M11.6 415.600c.8-3 3-4.600 5.800-4.600s5 1.600 5.800 4.600"/></g><path d="M26.0 443.5L26.0 446.1L23.7 446.5L23.1 448.0L24.4 450.0L22.6 451.8L20.6 450.5L19.1 451.1L18.7 453.4L16.1 453.4L15.7 451.1L14.2 450.5L12.2 451.8L10.4 450.0L11.7 448.0L11.1 446.5L8.8 446.1L8.8 443.5L11.1 443.1L11.7 441.6L10.4 439.6L12.2 437.8L14.2 439.1L15.7 438.5L16.1 436.2L18.7 436.2L19.1 438.5L20.6 439.1L22.6 437.8L24.4 439.6L23.1 441.6L23.7 443.1z" stroke="#858585" stroke-width="1.150"/><circle cx="17.4" cy="444.8" r="2.600" stroke="#858585" stroke-width="1.150"/><circle cx="23" cy="44.6" r="5.7" fill="#0a7ad1" stroke="none"/><circle cx="22.4" cy="114.4" r="6" fill="#0a7ad1" stroke="none"/><text x="23" y="46.9" font-family="Liberation Sans, sans-serif" font-weight="bold" font-size="6.4" fill="#fff" stroke="none" text-anchor="middle">1</text><text x="22.4" y="116.7" font-family="Liberation Sans, sans-serif" font-weight="bold" font-size="6.4" fill="#fff" stroke="none" text-anchor="middle">40</text><g stroke="#fff" stroke-width=".85"><path d="M8.800 468.800l3.800 2.200-3.800 2.200M16.200 465.400l-3.800 2.200 3.800 2.200"/><circle cx="33.6" cy="466.2" r="1.3"/><circle cx="33.6" cy="473.4" r="1.3"/><circle cx="37.8" cy="467.6" r="1.3"/><path d="M33.6 467.6v4.4M37.8 469c0 1.8-2 2.2-3.8 2.6"/><path d="M79.600 472.600h-.900a2.100 2.100 0 0 1-.3-4.100 3 3 0 0 1 5.800 0 2.100 2.100 0 0 1-.3 4.100h-.900M81.300 473.400v-3.800M79.900 470.800l1.400-1.400 1.400 1.400"/><circle cx="102.6" cy="469.8" r="4.3"/><path d="M100.800 468l3.600 3.600M104.400 468l-3.600 3.600"/><path d="M126.600 465.600l4.500 8.200h-9zM126.600 468.600v2.600M126.600 472.300v.2"/><path d="M501.200 472.400h7.400c-1.200-1-1.200-2-1.200-4a2.500 2.500 0 0 0-5 0c0 2 0 3-1.200 4zM504 473.400a1 1 0 0 0 1.800 0"/></g><path d="M52.0 144.4h-6.600q-1.400 0-1.400 1.400v26q0 1.400 1.400 1.400h6.600" stroke="#b07f1e" stroke-width="1.150"/><rect x="38.4" y="151.300" width="12.300" height="12.600" rx="1.600" fill="#474747" stroke="#8a6c36" stroke-width=".8"/><path d="M294.4 144.4h-6.600q-1.400 0-1.400 1.400v26q0 1.400 1.400 1.400h6.600" stroke="#b07f1e" stroke-width="1.150"/><rect x="280.8" y="151.300" width="12.300" height="12.600" rx="1.600" fill="#474747" stroke="#8a6c36" stroke-width=".8"/></svg><div class="edge-t"></div><div class="edge-l"></div><div class="edge-b"></div><div class="edge-r"></div></div>
<div class="win now" style="left:560px"><div class="titlebar"></div><div class="actbar"></div><div class="tabsbar"></div><div class="tab1"></div><span class="t" style="left:31.50px;top:4.20px;font-size:9.3px;color:#9d9d9d;letter-spacing:-0.371px;">File</span><span class="t" style="left:56.80px;top:4.20px;font-size:9.3px;color:#9d9d9d;letter-spacing:-0.058px;">Edit</span><span class="t" style="left:84.20px;top:4.20px;font-size:9.3px;color:#9d9d9d;letter-spacing:-0.050px;">Selection</span><span class="t" style="left:133.60px;top:4.20px;font-size:9.3px;color:#9d9d9d;letter-spacing:-0.046px;">View</span><span class="t" style="left:165.20px;top:4.20px;font-size:9.3px;color:#9d9d9d;letter-spacing:-0.203px;">Go</span><div class="dot" style="left:218px;top:10.1px;width:3.4px;height:3.4px;background:#a6a6a6"></div><span class="t" style="left:224.80px;top:4.20px;font-size:8.6px;color:#9d9d9d;letter-spacing:0.096px;">Merging: target.ts - diffing-data...</span><span class="t" style="left:44.80px;top:26.70px;font-size:7px;color:#3d94d6;letter-spacing:-0.327px;font-weight:bold;">TS</span><span class="t" style="left:58.10px;top:27.30px;font-size:9.3px;color:#f48771;letter-spacing:0.084px;">Merging: target.ts 9+, !</span><div class="dot" style="left:160.3px;top:31.4px"></div><span class="t" style="left:46.90px;top:48.40px;font-size:9.3px;color:#a0a0a0;letter-spacing:0.191px;">merge-git-playground</span><span class="t" style="left:153.60px;top:47.70px;font-size:7px;color:#3d94d6;letter-spacing:-0.327px;font-weight:bold;">TS</span><span class="t" style="left:167.00px;top:48.40px;font-size:9.3px;color:#a0a0a0;letter-spacing:0.101px;">target.ts</span><span class="t" style="left:212.80px;top:48.40px;font-size:9.3px;color:#a0a0a0;letter-spacing:-3.297px;">…</span><span class="t" style="left:42.30px;top:66.80px;font-size:9.3px;color:#dcdcdc;letter-spacing:0.108px;">Incoming</span><span class="t" style="left:95.60px;top:66.80px;font-size:8.4px;color:#8e8e8e;letter-spacing:-0.092px;">03057ce</span><span class="t" style="left:131.50px;top:66.80px;font-size:7px;color:#6e6e6e;">•</span><span class="t" style="left:137.40px;top:66.80px;font-size:8.4px;color:#8e8e8e;letter-spacing:0.086px;">theirs</span><span class="t" style="left:284.50px;top:66.80px;font-size:9.3px;color:#dcdcdc;letter-spacing:0.069px;">Current</span><span class="t" style="left:330.60px;top:66.80px;font-size:8.4px;color:#8e8e8e;letter-spacing:0.031px;">036fb6e</span><span class="t" style="left:366.30px;top:66.80px;font-size:7px;color:#6e6e6e;">•</span><span class="t" style="left:374.20px;top:66.80px;font-size:8.4px;color:#8e8e8e;letter-spacing:0.211px;">main</span><div class="pane" style="left:35px;top:83.2px;width:242.5px;height:130.7px"><div class="hatch" style="left:58px;top:71.93px;width:190px;height:28.06px"></div><div class="cbox" style="left:58px;top:60.83px;width:174.4px;height:39.16px"></div><span class="t" style="left:60.40px;top:59.43px;font-size:8.5px;color:#999;letter-spacing:0.092px;">Accept Incoming | Accept Both</span><div class="ln" style="top:-7.15px"><b style="width:39.40px">7</b><pre style="left:58.40px"><i class="k">import</i> <i class="b">{</i> <i class="v">CancellationToken</i> <i class="b">}</i> <i class="k">from</i> <i class="s">'vs/base/common/cancellation'</i><i class="p">;</i></pre></div><div class="ln" style="top:6.63px"><b style="width:39.40px">8</b><pre style="left:58.40px"><i class="k">import</i> <i class="b">{</i> <i class="v">onUnexpectedError</i> <i class="b">}</i> <i class="k">from</i> <i class="s">'vs/base/common/errors'</i><i class="p">;</i></pre></div><div class="ln" style="top:20.41px"><b style="width:39.40px">9</b><pre style="left:58.40px"><i class="k">import</i> <i class="b">{</i> <i class="v">once</i> <i class="k">as</i> <i class="v">onceFn</i> <i class="b">}</i> <i class="k">from</i> <i class="s">'vs/base/common/functional'</i><i class="p">;</i></pre></div><div class="ln" style="top:34.19px"><b style="width:39.40px">10</b><pre style="left:58.40px"><i class="k">import</i> <i class="b">{</i> <i class="v">combinedDisposable</i><i class="p">,</i> <i class="v">Disposable</i><i class="p">,</i> <i class="v">DisposableStore</i> <i class="b">}</i> <i class="k">from</i> <i class="s">'vs/base/common/lifecycle'</i><i class="p">;</i></pre></div><div class="ln" style="top:47.97px"><b style="width:39.40px">11</b><pre style="left:58.40px"><i class="k">import</i> <i class="b">{</i> <i class="v">LinkedList</i> <i class="b">}</i> <i class="k">from</i> <i class="s">'vs/base/common/linkedList'</i><i class="p">;</i></pre></div><div class="ln" style="top:100.91px"><b style="width:39.40px">12</b><pre style="left:58.40px"></pre></div><div class="ln" style="top:114.69px"><b style="width:39.40px">13</b><pre style="left:58.40px"></pre></div><div class="ln" style="top:128.47px"><b style="width:39.40px">14</b><pre style="left:58.40px"><i class="c">// </i><i class="d">----------------------------------------------------------------------------------------------------</i></pre></div></div><div class="pane" style="left:277.7px;top:83.2px;width:242px;height:130.7px"><div class="olive" style="left:58.3px;top:86.21px;width:190px;height:13.78px"></div><div class="cbox" style="left:58.3px;top:60.83px;width:174.5px;height:39.16px"></div><span class="t" style="left:60.40px;top:59.43px;font-size:8.5px;color:#999;letter-spacing:0.029px;">Accept Current | Accept Both</span><div class="ln" style="top:-7.15px"><b style="width:39.30px">6</b><pre style="left:58.70px"><i class="k">import</i> <i class="b">{</i> <i class="v">CancellationToken</i> <i class="b">}</i> <i class="k">from</i> <i class="s">'vs/base/common/cancellation'</i><i class="p">;</i></pre></div><div class="ln" style="top:6.63px"><b style="width:39.30px">7</b><pre style="left:58.70px"><i class="k">import</i> <i class="b">{</i> <i class="v">onUnexpectedError</i> <i class="b">}</i> <i class="k">from</i> <i class="s">'vs/base/common/errors'</i><i class="p">;</i></pre></div><div class="ln" style="top:20.41px"><b style="width:39.30px">8</b><pre style="left:58.70px"><i class="k">import</i> <i class="b">{</i> <i class="v">once</i> <i class="k">as</i> <i class="v">onceFn</i> <i class="b">}</i> <i class="k">from</i> <i class="s">'vs/base/common/functional'</i><i class="p">;</i></pre></div><div class="ln" style="top:34.19px"><b style="width:39.30px">9</b><pre style="left:58.70px"><i class="k">import</i> <i class="b">{</i> <i class="v">combinedDisposable</i><i class="p">,</i> <i class="v">Disposable</i><i class="p">,</i> <i class="v">DisposableStore</i> <i class="b">}</i> <i class="k">from</i> <i class="s">'vs/base/common/lifecycle'</i><i class="p">;</i></pre></div><div class="ln" style="top:47.97px"><b style="width:39.30px">10</b><pre style="left:58.70px"><i class="k">import</i> <i class="b">{</i> <i class="v">LinkedList</i> <i class="b">}</i> <i class="k">from</i> <i class="s">'vs/base/common/linkedList'</i><i class="p">;</i></pre></div><div class="ln" style="top:73.35px"><b style="width:39.30px">11</b><pre style="left:58.70px"><i class="k">import</i> <i class="b">{</i> <i class="v">StopWatch</i> <i class="b">}</i> <i class="k">from</i> <i class="s">'vs/base/common/stopwatch'</i><i class="p">;</i></pre></div><div class="ln" style="top:87.13px"><b style="width:39.30px">12</b><pre style="left:58.70px"><i class="k">import</i> <i class="b">{</i> <i class="v">Log</i> <i class="b">}</i> <i class="k">from</i> <i class="s">'vs/base/common/log'</i><i class="p">;</i></pre></div><div class="ln" style="top:100.91px"><b style="width:39.30px">13</b><pre style="left:58.70px"></pre></div><div class="ln" style="top:114.69px"><b style="width:39.30px">14</b><pre style="left:58.70px"></pre></div><div class="ln" style="top:128.47px"><b style="width:39.30px">15</b><pre style="left:58.70px"><i class="c">// </i><i class="d">----------------------------------------------------------------------------------------------------</i></pre></div></div><div class="vline" style="left:267.2px;top:83.2px;height:130.7px;background:#2d2d2d"></div><div class="vline" style="left:510.4px;top:83.2px;height:130.7px;background:#2d2d2d"></div><div class="vline" style="left:465.4px;top:235.3px;height:226.7px;background:#292929"></div><div class="vline" style="left:277.2px;top:62.8px;height:151.1px;background:#2b2b2b"></div><div class="ymark" style="left:270.6px;top:84.2px;width:4.6px;height:11.3px"></div><div class="ymark" style="left:514px;top:84.2px;width:4.4px;height:12px"></div><div class="shadow" style="left:35px;top:83.2px;width:485px;height:3.5px"></div><div class="reshead"></div><span class="t" style="left:42.30px;top:218.30px;font-size:9.3px;color:#dcdcdc;letter-spacing:-0.293px;">Result</span><span class="t" style="left:72.00px;top:218.30px;font-size:8.4px;color:#8e8e8e;letter-spacing:0.270px;">merge-git-playground\target.ts</span><span class="t" style="left:405.60px;top:218.30px;font-size:8.4px;color:#a6a6a6;letter-spacing:0.059px;">5 Conflicts Remaining</span><div class="pane" style="left:35px;top:235.3px;width:430.5px;height:226.7px"><div class="cbox" style="left:58px;top:59.68px;width:372.6px;height:25.38px"></div><span class="t" style="left:60.80px;top:58.28px;font-size:8.5px;color:#999;letter-spacing:-0.005px;">No Changes Accepted</span><div class="ln" style="top:-8.30px"><b style="width:39.40px">7</b><pre style="left:58.40px"><i class="k">import</i> <i class="b">{</i> <i class="v">CancellationToken</i> <i class="b">}</i> <i class="k">from</i> <i class="s">'vs/base/common/cancellation'</i><i class="p">;</i></pre></div><div class="ln" style="top:5.48px"><b style="width:39.40px">8</b><pre style="left:58.40px"><i class="k">import</i> <i class="b">{</i> <i class="v">onUnexpectedError</i> <i class="b">}</i> <i class="k">from</i> <i class="s">'vs/base/common/errors'</i><i class="p">;</i></pre></div><div class="ln" style="top:19.26px"><b style="width:39.40px">9</b><pre style="left:58.40px"><i class="k">import</i> <i class="b">{</i> <i class="v">once</i> <i class="k">as</i> <i class="v">onceFn</i> <i class="b">}</i> <i class="k">from</i> <i class="s">'vs/base/common/functional'</i><i class="p">;</i></pre></div><div class="ln" style="top:33.04px"><b style="width:39.40px">10</b><pre style="left:58.40px"><i class="k">import</i> <i class="b">{</i> <i class="v">combinedDisposable</i><i class="p">,</i> <i class="v">Disposable</i><i class="p">,</i> <i class="v">DisposableStore</i><i class="p">,</i> <i class="v">IDisposable</i><i class="p">,</i> <i class="v">MutableDisposable</i> <i class="b">}</i> <i class="k">from</i> <i class="s">'vs/base/common/lifecycle'</i><i class="p">;</i></pre></div><div class="ln" style="top:46.82px"><b style="width:39.40px">11</b><pre style="left:58.40px"><i class="k">import</i> <i class="b">{</i> <i class="v">LinkedList</i> <i class="b">}</i> <i class="k">from</i> <i class="s">'vs/base/common/linkedList'</i><i class="p">;</i></pre></div><div class="ln" style="top:72.20px"><b style="width:39.40px">12</b><pre style="left:58.40px"><i class="k">import</i> <i class="b">{</i> <i class="v">StopWatch</i> <i class="b">}</i> <i class="k">from</i> <i class="s">'vs/base/common/stopwatch'</i><i class="p">;</i></pre></div><div class="ln" style="top:85.98px"><b style="width:39.40px">13</b><pre style="left:58.40px"></pre></div><div class="ln" style="top:99.76px"><b style="width:39.40px">14</b><pre style="left:58.40px"></pre></div><div class="ln" style="top:113.54px"><b style="width:39.40px">15</b><pre style="left:58.40px"><i class="c">// </i><i class="d">----------------------------------------------------------------------------------------------------</i></pre></div><div class="ln" style="top:127.32px"><b style="width:39.40px">16</b><pre style="left:58.40px"><i class="c">// Uncomment the next line to print warnings whenever an emitter with listeners is disposed.</i></pre></div><div class="ln" style="top:141.10px"><b style="width:39.40px">17</b><pre style="left:58.40px"><i class="c">// </i><i class="d">----------------------------------------------------------------------------------------------------</i></pre></div><div class="ln" style="top:154.88px"><b style="width:39.40px">18</b><pre style="left:58.40px"><i class="l">let</i> <i class="v">_enableDisposeWithListenerWarning</i> <i class="p">=</i> <i class="l">false</i><i class="p">;</i></pre></div><div class="ln" style="top:168.66px"><b style="width:39.40px">19</b><pre style="left:58.40px"><i class="c">// _enableDisposeWithListenerWarning = Boolean("TRUE"); // causes a linter warning</i></pre></div><div class="ln" style="top:182.44px"><b style="width:39.40px">20</b><pre style="left:58.40px"></pre></div><div class="ln" style="top:196.22px"><b style="width:39.40px">21</b><pre style="left:58.40px"></pre></div><div class="ln" style="top:210.00px"><b style="width:39.40px">22</b><pre style="left:58.40px"><i class="c">// </i><i class="d">----------------------------------------------------------------------------------------------------</i></pre></div><div class="ln" style="top:223.78px"><b style="width:39.40px">23</b><pre style="left:58.40px"><i class="c">// Uncomment the next line to print warnings whenever a snapshotted event listener list grows</i></pre></div></div><svg width="520" height="478" viewBox="0 0 520 478" style="left:0;top:0"><clipPath id="c3134"><rect x="35" y="235.3" width="430.5" height="230"/></clipPath><path clip-path="url(#c3134)" d="M282.8 240.3L284.9 238.4L287.1 240.3L289.3 238.4L291.5 240.3L293.6 238.4L295.8 240.3L298.0 238.4L300.1 240.3L302.3 238.4L304.5 240.3L306.7 238.4L308.8 240.3L311.0 238.4L313.2 240.3L315.3 238.4L317.5 240.3L319.7 238.4L321.8 240.3L324.0 238.4L326.2 240.3L328.4 238.4L330.5 240.3L332.7 238.4L334.9 240.3L337.0 238.4L339.2 240.3L341.4 238.4L343.5 240.3L345.7 238.4L347.9 240.3L350.1 238.4L352.2 240.3L354.4 238.4L356.6 240.3L358.7 238.4L360.9 240.3L363.1 238.4L365.2 240.3L367.4 238.4L369.6 240.3L371.8 238.4L373.9 240.3L376.1 238.4L378.3 240.3L380.4 238.4L382.6 240.3L384.8 238.4L386.9 240.3L389.1 238.4L391.3 240.3L393.5 238.4L395.6 240.3L397.8 238.4L400.0 240.3L402.1 238.4L404.3 240.3L406.5 238.4L408.6 240.3L410.8 238.4L413.0 240.3L415.2 238.4L417.3 240.3L419.5 238.4L421.7 240.3L423.8 238.4L426.0 240.3L428.2 238.4L430.3 240.3L432.5 238.4L434.7 240.3L436.9 238.4L439.0 240.3L441.2 238.4L443.4 240.3L444.3 238.4M282.8 254.1L284.9 252.2L287.1 254.1L289.3 252.2L291.5 254.1L293.6 252.2L295.8 254.1L298.0 252.2L300.1 254.1L302.3 252.2L304.5 254.1L306.7 252.2L308.8 254.1L311.0 252.2L313.2 254.1L315.3 252.2L317.5 254.1L319.7 252.2L321.8 254.1L324.0 252.2L326.2 254.1L328.4 252.2L330.5 254.1L332.7 252.2L334.9 254.1L337.0 252.2L339.2 254.1L341.4 252.2L343.5 254.1L345.7 252.2L347.9 254.1L350.1 252.2L352.2 254.1L354.4 252.2L356.6 254.1L358.7 252.2L360.9 254.1L363.1 252.2L365.2 254.1L367.4 252.2L369.6 254.1L371.8 252.2L373.9 254.1L376.1 252.2L378.3 254.1L380.4 252.2L382.6 254.1L384.8 252.2L386.9 254.1L389.1 252.2L391.3 254.1L393.5 252.2L395.6 254.1L397.8 252.2L400.0 254.1L402.1 252.2L404.3 254.1L406.5 252.2L408.6 254.1L410.8 252.2L410.9 254.1M266.1 267.9L268.2 266.0L270.4 267.9L272.6 266.0L274.8 267.9L276.9 266.0L279.1 267.9L281.3 266.0L283.4 267.9L285.6 266.0L287.8 267.9L289.9 266.0L292.1 267.9L294.3 266.0L296.5 267.9L298.6 266.0L300.8 267.9L303.0 266.0L305.1 267.9L307.3 266.0L309.5 267.9L311.6 266.0L313.8 267.9L316.0 266.0L318.2 267.9L320.3 266.0L322.5 267.9L324.7 266.0L326.8 267.9L329.0 266.0L331.2 267.9L333.3 266.0L335.5 267.9L337.7 266.0L339.9 267.9L342.0 266.0L344.2 267.9L346.4 266.0L348.5 267.9L350.7 266.0L352.9 267.9L355.0 266.0L357.2 267.9L359.4 266.0L361.6 267.9L363.7 266.0L365.9 267.9L368.1 266.0L370.2 267.9L372.4 266.0L374.6 267.9L376.7 266.0L378.9 267.9L381.1 266.0L383.3 267.9L385.4 266.0L387.6 267.9L389.8 266.0L391.9 267.9L394.1 266.0L396.3 267.9L398.4 266.0L400.6 267.9L402.8 266.0L405.0 267.9L407.1 266.0L409.3 267.9L411.5 266.0L413.6 267.9L415.8 266.0L416.5 267.9M243.8 295.4L246.0 293.5L248.1 295.4L250.3 293.5L252.5 295.4L254.6 293.5L256.8 295.4L259.0 293.5L261.1 295.4L263.3 293.5L265.5 295.4L267.7 293.5L269.8 295.4L272.0 293.5L274.2 295.4L276.3 293.5L278.5 295.4L280.7 293.5L282.9 295.4L285.0 293.5L287.2 295.4L289.4 293.5L291.5 295.4L293.7 293.5L295.9 295.4L298.0 293.5L300.2 295.4L302.4 293.5L304.6 295.4L306.7 293.5L308.9 295.4L311.1 293.5L313.2 295.4L315.4 293.5L317.6 295.4L319.7 293.5L321.9 295.4L324.1 293.5L326.3 295.4L328.4 293.5L330.6 295.4L332.8 293.5L334.9 295.4L337.1 293.5L339.3 295.4L341.4 293.5L343.6 295.4L345.8 293.5L348.0 295.4L350.1 293.5L352.3 295.4L354.5 293.5L356.6 295.4L358.8 293.5L361.0 295.4L363.1 293.5L365.3 295.4L367.5 293.5L369.7 295.4L371.8 293.5L374.0 295.4L376.2 293.5L378.3 295.4L380.5 293.5L382.7 295.4L384.8 293.5L387.0 295.4L389.2 293.5L391.4 295.4L393.5 293.5L394.2 295.4M143.5 320.8L145.7 318.9L147.9 320.8L150.0 318.9L152.2 320.8L154.4 318.9L156.5 320.8L158.7 318.9L160.9 320.8L163.1 318.9L165.2 320.8L167.4 318.9L169.6 320.8L171.7 318.9L173.9 320.8L176.1 318.9L178.2 320.8L180.4 318.9L182.6 320.8L184.8 318.9L186.9 320.8L189.1 318.9L191.3 320.8L193.4 318.9L193.7 320.8M238.2 320.8L240.4 318.9L242.6 320.8L244.7 318.9L246.9 320.8L249.1 318.9L251.2 320.8L253.4 318.9L255.6 320.8L257.7 318.9L259.9 320.8L262.1 318.9L264.3 320.8L266.4 318.9L268.6 320.8L270.8 318.9L272.9 320.8L275.1 318.9L277.3 320.8L279.5 318.9L281.6 320.8L283.8 318.9L286.0 320.8L288.1 318.9L290.3 320.8L292.5 318.9L294.6 320.8L296.8 318.9L299.0 320.8L301.2 318.9L303.3 320.8L305.5 318.9L307.7 320.8L309.8 318.9L312.0 320.8L314.2 318.9L316.3 320.8L318.5 318.9L320.7 320.8L322.9 318.9L325.0 320.8L327.2 318.9L329.4 320.8L331.5 318.9L333.7 320.8L335.9 318.9L338.0 320.8L340.2 318.9L342.4 320.8L344.6 318.9L346.7 320.8L348.9 318.9L351.1 320.8L353.2 318.9L355.4 320.8L357.6 318.9L359.7 320.8L361.9 318.9L364.1 320.8L366.3 318.9L368.4 320.8L370.6 318.9L372.8 320.8L374.9 318.9L377.1 320.8L379.3 318.9L381.4 320.8L383.0 318.9" fill="none" stroke="#d8403c" stroke-width=".75" opacity=".9" stroke-linejoin="round"/></svg><div class="shadow" style="left:35px;top:235.3px;width:485px;height:3.5px"></div><svg width="520" height="478" viewBox="0 0 520 478" style="left:0;top:0"><rect x="471.0" y="236.5" width="39.4" height="8.8" fill="#8c2226"/><rect x="476.2" y="236.8" width="34.2" height="7.6" fill="#c42828"/><rect x="470.5" y="247.4" width="40.1" height="1.6" fill="#21332a"/><rect x="470.5" y="248.7" width="40.1" height="1.6" fill="#21332a"/><rect x="470.5" y="255.5" width="40.1" height="1.6" fill="#21332a"/><rect x="470.5" y="256.9" width="40.1" height="1.6" fill="#21332a"/><rect x="470.5" y="258.3" width="40.1" height="1.6" fill="#21332a"/><rect x="472.6" y="295.7" width="37.2" height="1.6" fill="#21332a"/><rect x="472.6" y="296.8" width="37.2" height="1.6" fill="#21332a"/><rect x="473.4" y="329.0" width="37.2" height="1.6" fill="#293f2c"/><rect x="473.4" y="330.5" width="37.2" height="1.6" fill="#293f2c"/><rect x="473.4" y="332.0" width="37.2" height="1.6" fill="#293f2c"/><rect x="473.4" y="339.2" width="37.2" height="1.6" fill="#293f2c"/><rect x="473.4" y="340.6" width="37.2" height="1.6" fill="#293f2c"/><rect x="473.4" y="342.1" width="37.2" height="1.6" fill="#293f2c"/><rect x="473.4" y="350.0" width="37.2" height="1.6" fill="#293f2c"/><rect x="473.4" y="351.5" width="37.2" height="1.6" fill="#293f2c"/><rect x="473.4" y="353.0" width="37.2" height="1.6" fill="#293f2c"/><rect x="472.6" y="363.8" width="37.9" height="1.6" fill="#21332a"/><rect x="473.4" y="371.4" width="36.5" height="1.6" fill="#21332a"/><rect x="473.4" y="372.6" width="36.5" height="1.6" fill="#21332a"/><rect x="473.4" y="383.3" width="37.2" height="1.6" fill="#293f2c"/><rect x="473.4" y="384.7" width="37.2" height="1.6" fill="#293f2c"/><rect x="473.4" y="386.1" width="37.2" height="1.6" fill="#293f2c"/><rect x="473.4" y="429.5" width="37.2" height="1.6" fill="#293f2c"/><rect x="473.4" y="431.0" width="37.2" height="1.6" fill="#293f2c"/><rect x="473.4" y="436.7" width="37.2" height="1.6" fill="#293f2c"/><rect x="473.4" y="438.1" width="37.2" height="1.6" fill="#293f2c"/><rect x="471.0" y="285.9" width="39.4" height="1.5" fill="#8a1f24"/><rect x="482.5" y="285.8" width="3.0" height="1.6" fill="#e04848"/><path d="M471.1 248.2h38.4M472.4 249.6h37.6M471.1 256.3h38.5M471.1 257.7h38.8M471.5 259.1h37.7M471.1 265.0h31.0M472.3 266.5h29.8M473.2 296.6h35.2M474.5 297.7h34.7M473.2 364.6h36.0M474.0 372.2h34.8M474.5 373.4h34.5" stroke="#416d3b" stroke-width="1.2" opacity="0.65" fill="none" stroke-dasharray="1.4 .6 2.9 .7 .7 .6 2.2 .7 3.6 .7 1.4 .7"/><path d="M474.0 329.9h35.4M474.9 331.4h34.5M474.0 332.9h36.0M474.0 340.0h35.6M474.5 341.5h34.8M474.0 342.9h36.1M474.0 350.9h35.3M475.3 352.4h34.0M474.0 353.9h36.0M474.0 384.1h35.7M475.0 385.5h34.5M474.7 386.9h34.7M474.0 430.3h36.2M474.2 431.8h35.3M474.0 437.5h36.1M475.2 438.9h34.2" stroke="#5f8c55" stroke-width="1.2" opacity="0.72" fill="none" stroke-dasharray="1.4 .6 2.9 .7 .7 .6 2.2 .7 3.6 .7 1.4 .7"/><path d="M471.1 251.4h23.2M471.4 252.7h22.4M471.1 261.6h21.5M471.1 269.4h2.1M474.3 269.4h1.5M477.0 269.4h2.2M486.8 269.4h4.3M497.5 269.4h3.1M505.1 269.4h1.3M498.1 270.9h5.8M471.1 273.2h9.5M471.9 274.5h6.7M473.2 277.9h29.6M473.7 279.4h28.8M487.9 281.0h4.7M493.2 281.0h2.9M502.4 281.0h1.1M478.4 282.7h5.7M489.6 282.7h3.4M473.2 300.1h28.9M498.2 303.4h3.3M480.5 304.9h7.0M481.3 306.4h8.3M481.7 307.9h3.3M480.5 310.4h8.7M481.5 311.9h6.2M479.7 320.1h4.5M473.2 334.9h4.4M481.4 334.9h3.6M485.6 334.9h5.5M491.7 334.9h2.3M473.8 336.4h3.3M478.1 336.4h4.0M490.3 336.4h3.1M500.1 336.4h3.6M504.6 336.4h3.9M474.0 345.0h4.3M485.0 345.0h3.4M493.6 345.0h5.8M474.4 346.5h2.1M482.0 346.5h1.7M491.1 355.9h4.6M496.8 355.9h4.0M479.2 358.8h1.8M481.6 358.8h1.9M497.2 358.8h4.7M481.7 360.3h1.8M473.2 367.2h2.5M480.0 367.2h2.1M492.7 367.2h4.1M482.3 368.3h2.5M486.4 376.1h2.3M489.2 376.1h1.6M485.1 377.4h2.7M488.9 377.4h4.5M476.8 378.7h6.0M483.3 378.7h1.6M497.0 378.7h5.0M481.2 380.0h2.3M479.1 389.0h1.7M489.1 389.0h5.7M495.2 389.0h5.9M502.1 389.0h5.4M484.5 390.5h5.2M498.8 390.5h2.1M475.4 403.2h22.0M475.4 418.4h17.8M473.2 433.8h1.6M488.8 433.8h4.0M503.0 433.8h1.7M473.7 434.9h4.1M481.7 434.9h4.3M493.0 434.9h2.9M500.6 434.9h4.5M487.8 441.1h4.9M474.5 442.6h1.7M495.9 442.6h4.6M501.3 442.6h4.1M493.9 444.1h1.8M500.3 444.1h5.0M475.4 446.4h21.2M475.5 448.2h19.4M475.4 452.4h24.9" stroke="#4f86ad" stroke-width="1.2" opacity="0.7" fill="none" stroke-dasharray="1.4 .6 2.9 .7 .7 .6 2.2 .7 3.6 .7 1.4 .7"/><path d="M501.8 269.4h2.7M472.1 270.9h3.1M479.7 270.9h2.3M481.6 281.0h5.6M484.7 282.7h4.2M479.0 284.4h5.3M498.6 284.4h4.6M483.0 301.9h5.0M488.9 301.9h4.5M494.1 301.9h4.7M503.5 301.9h2.8M479.2 303.4h4.0M483.8 303.4h2.7M487.6 303.4h4.4M502.7 303.4h4.6M494.9 334.9h3.4M503.8 334.9h3.7M482.9 336.4h2.9M500.3 345.0h2.7M503.8 345.0h2.2M490.7 346.5h2.6M494.4 346.5h4.7M488.6 355.9h1.7M497.4 357.4h5.0M495.4 360.3h5.7M502.3 360.3h2.1M476.6 367.2h2.6M494.8 368.3h5.3M474.6 380.0h3.4M508.3 389.0h1.5M473.2 400.6h32.7M479.3 433.8h2.9M493.3 433.8h5.9M475.3 441.1h4.7M480.7 441.1h2.5M505.4 441.1h2.7M476.9 442.6h4.9" stroke="#3f9a8a" stroke-width="1.2" opacity="0.7" fill="none" stroke-dasharray="1.4 .6 2.9 .7 .7 .6 2.2 .7 3.6 .7 1.4 .7"/><path d="M492.3 269.4h4.6M476.0 270.9h2.9M504.4 270.9h2.6M494.2 282.7h4.4M502.5 282.7h2.1M491.5 284.4h5.9M503.9 284.4h2.8M478.3 323.9h2.5M478.9 325.0h2.1M477.1 346.5h4.3M487.1 346.5h2.6M499.8 346.5h4.0M478.6 355.9h3.9M482.9 357.4h5.5M486.8 358.8h1.8M503.1 358.8h3.8M484.3 360.3h2.0M487.5 360.3h2.1M490.0 360.3h4.6M483.2 367.2h3.5M500.1 367.2h1.7M476.1 368.3h5.3M485.3 368.3h5.6M491.4 376.1h3.7M496.0 376.1h3.1M476.6 377.4h3.2M490.9 378.7h2.9M497.3 380.0h5.3M473.2 389.0h5.3M490.5 390.5h2.1M493.1 390.5h5.0M501.6 390.5h4.6M475.4 425.3h11.5M475.8 433.8h2.7M486.8 434.9h5.7M496.7 434.9h3.5M486.3 442.6h3.6" stroke="#94609a" stroke-width="1.2" opacity="0.75" fill="none" stroke-dasharray="1.4 .6 2.9 .7 .7 .6 2.2 .7 3.6 .7 1.4 .7"/><path d="M473.2 355.9h4.7M501.5 355.9h5.1M491.7 357.4h5.0M502.9 357.4h3.5M474.7 358.8h3.4M474.2 360.3h2.2M504.9 360.3h2.7M484.1 376.1h1.7M499.9 376.1h5.5M480.9 377.4h3.6M484.3 380.0h6.0M473.2 441.1h1.5M484.2 441.1h2.9M473.3 444.1h4.2M496.7 444.1h3.1" stroke="#a4735a" stroke-width="1.2" opacity="0.7" fill="none" stroke-dasharray="1.4 .6 2.9 .7 .7 .6 2.2 .7 3.6 .7 1.4 .7"/><path d="M479.9 269.4h5.8M483.2 270.9h1.6M485.5 270.9h3.3M489.8 270.9h3.1M494.0 270.9h3.5M507.7 270.9h2.0M478.3 281.0h2.4M497.2 281.0h4.3M499.2 282.7h2.4M484.8 284.4h5.6M480.5 288.9h12.3M481.7 290.4h8.6M473.2 293.3h3.3M478.3 301.9h4.0M499.9 301.9h2.7M492.7 303.4h4.4M479.0 316.3h15.9M479.3 317.6h15.3M478.7 334.9h2.3M499.0 334.9h4.3M486.6 336.4h3.0M494.1 336.4h5.2M478.9 345.0h5.4M489.3 345.0h3.7M484.7 346.5h1.6M487.3 367.2h4.7M497.2 367.2h2.1M473.7 368.3h1.6M492.0 368.3h2.1M482.0 389.0h2.4M485.2 389.0h3.3M474.1 390.5h4.3M478.8 390.5h4.9M476.1 393.2h13.4M476.5 394.2h14.0M476.1 396.4h7.2M478.3 406.1h18.6M478.3 409.0h8.4M474.7 413.6h19.8M475.8 415.1h16.8M476.1 420.9h15.9M476.6 422.4h9.8M482.8 433.8h2.7M486.2 433.8h1.7M499.9 433.8h2.7M478.8 434.9h1.9M505.9 434.9h3.5M476.1 449.7h12.4M477.3 450.8h10.5M479.0 454.2h12.5M479.4 455.7h13.4M479.1 457.3h13.5M480.0 458.9h11.3M480.4 460.4h12.6" stroke="#8c8c8c" stroke-width="1.2" opacity="0.6" fill="none" stroke-dasharray="1.4 .6 2.9 .7 .7 .6 2.2 .7 3.6 .7 1.4 .7"/><path d="M484.4 358.8h1.6M476.9 360.3h4.0M473.2 376.1h5.2M473.7 377.4h2.4M496.5 377.4h5.7M473.4 378.7h2.8M485.9 378.7h4.3M494.4 378.7h1.8M491.1 380.0h5.7M478.2 444.1h3.6M487.4 444.1h5.7" stroke="#a89a3a" stroke-width="1.2" opacity="0.7" fill="none" stroke-dasharray="1.4 .6 2.9 .7 .7 .6 2.2 .7 3.6 .7 1.4 .7"/><path d="M471.8 237.9h26.7M472.9 239.4h24.5M473.2 240.9h24.5M473.2 242.4h28.8M472.5 243.9h24.0" stroke="#f29090" stroke-width="1.2" opacity="0.6" fill="none" stroke-dasharray="1.4 .6 2.9 .7 .7 .6 2.2 .7 3.6 .7 1.4 .7"/><path d="M483.1 355.9h4.6M474.3 357.4h3.7M478.7 357.4h3.3M489.5 357.4h1.8M489.5 358.8h1.7M491.7 358.8h4.3M479.1 376.1h4.3M494.2 377.4h1.6M502.6 377.4h1.1M478.5 380.0h1.8M493.4 441.1h5.1M499.7 441.1h5.3M482.9 442.6h2.4M491.0 442.6h4.3M482.8 444.1h3.5" stroke="#c8c8c8" stroke-width="1.2" opacity="0.7" fill="none" stroke-dasharray="1.4 .6 2.9 .7 .7 .6 2.2 .7 3.6 .7 1.4 .7"/><rect x="467.1" y="243.9" width="1.5" height="1.5" fill="#c9a227"/><rect x="467.1" y="260.3" width="1.5" height="1.5" fill="#c9a227"/><rect x="467.1" y="302.9" width="1.5" height="1.5" fill="#c9a227"/><rect x="467.1" y="311.5" width="1.5" height="1.5" fill="#c9a227"/><rect x="467.1" y="335.4" width="1.5" height="1.5" fill="#c9a227"/><rect x="510.600" y="235.300" width=".8" height="226.700" fill="#333"/><rect x="514" y="235.9" width="3.900" height="6.100" fill="#e0a200"/><rect x="514" y="246.8" width="3.900" height="8.200" fill="#e0a200"/><rect x="517.800" y="243.9" width="1.400" height="2.200" fill="#c8262c"/><rect x="517.400" y="361.0" width="2" height="3.600" fill="#d3212a"/><rect x="517.400" y="411.5" width="2" height="4.300" fill="#d3212a"/></svg><div class="btn" style="left:370.2px;top:422.4px;width:85.6px;height:22.1px"></div><span class="t" style="left:377.70px;top:427.30px;font-size:9.3px;color:#fff;letter-spacing:0.090px;">Complete Merge</span><div class="status"></div><div class="remote"></div><span class="t" style="left:43.20px;top:463.00px;font-size:8.6px;color:#fff;letter-spacing:0.057px;">main!</span><span class="t" style="left:110.30px;top:463.00px;font-size:8.6px;color:#fff;letter-spacing:-0.381px;">14</span><span class="t" style="left:134.30px;top:463.00px;font-size:8.6px;color:#fff;letter-spacing:-0.181px;">0</span><span class="t" style="left:203.00px;top:463.00px;font-size:8.6px;color:#fff;letter-spacing:-0.171px;">Ln 1, Col 1</span><span class="t" style="left:254.70px;top:463.00px;font-size:8.6px;color:#fff;letter-spacing:-0.292px;">Tab Size: 4</span><span class="t" style="left:305.40px;top:463.00px;font-size:8.6px;color:#fff;letter-spacing:-0.716px;">LF</span><span class="t" style="left:325.20px;top:462.70px;font-size:8.6px;color:#fff;letter-spacing:1.125px;">{}</span><span class="t" style="left:338.60px;top:463.00px;font-size:8.6px;color:#fff;letter-spacing:-0.181px;">TypeScript</span><span class="t" style="left:390.00px;top:463.00px;font-size:8.6px;color:#fff;letter-spacing:-0.032px;">Deck | Connected | Active</span><svg width="520" height="478" viewBox="0 0 520 478" style="left:0;top:0" fill="none" stroke-linecap="round" stroke-linejoin="round"><rect x="7" y="5.6" width="12" height="10.2" fill="#1a7fd4" stroke="none"/><path d="M10.6 6.2v9M12.4 7.6h4.6M14 9.7h3.6M14 11.7h3.6M12.4 13.8h4.6" stroke="#eaf3fb" stroke-width="1"/><g stroke="#979797" stroke-width=".85"><rect x="358.400" y="6.500" width="9.300" height="8.800" rx=".3"/><path d="M361.400 6.500v8.800"/><rect x="374.300" y="6.500" width="9.300" height="8.800" rx=".3"/><path d="M374.300 12h9.300"/><rect x="390.200" y="6.500" width="9.300" height="8.800" rx=".3"/><path d="M396.300 6.500v8.800"/><rect x="406.8" y="6.8" width="4" height="8.6" rx=".6"/><rect x="413" y="6.8" width="2.8" height="2.8" rx=".5"/><rect x="413" y="12.4" width="2.8" height="2.8" rx=".5"/></g><g stroke="#b4b4b4" stroke-width=".8"><path d="M434.2 11.4h7.4"/><rect x="466.2" y="7.4" width="7.4" height="7.4" rx=".8"/><path d="M499.8 7.2l8 8M507.8 7.2l-8 8"/></g><g stroke="#c5c5c5" stroke-width=".9"><path d="M426.6 29.4h5.4l2.6 2.6v6.6h-8v-3.6"/><path d="M431.8 29.4v2.8h2.8"/><path d="M423.6 32.2h3.4v2.6M427 32.2l-3.4 3.6"/><path d="M448.2 38.4v-9M444.6 32.6l3.6-3.6 3.6 3.6"/><path d="M466.6 29.4v9M463 35.2l3.6 3.6 3.6-3.6"/><rect x="480.6" y="29.6" width="9" height="8.6" rx=".8"/><path d="M485.1 29.6v8.6"/></g><circle cx="501.2" cy="33.9" r="0.9" fill="#c5c5c5" stroke="none"/><circle cx="504.8" cy="33.9" r="0.9" fill="#c5c5c5" stroke="none"/><circle cx="508.4" cy="33.9" r="0.9" fill="#c5c5c5" stroke="none"/><circle cx="254.6" cy="73.6" r="0.9" fill="#c5c5c5" stroke="none"/><circle cx="258.2" cy="73.6" r="0.9" fill="#c5c5c5" stroke="none"/><circle cx="261.8" cy="73.6" r="0.9" fill="#c5c5c5" stroke="none"/><circle cx="497.2" cy="73.6" r="0.9" fill="#c5c5c5" stroke="none"/><circle cx="500.8" cy="73.6" r="0.9" fill="#c5c5c5" stroke="none"/><circle cx="504.4" cy="73.6" r="0.9" fill="#c5c5c5" stroke="none"/><circle cx="497.2" cy="225.2" r="0.9" fill="#c5c5c5" stroke="none"/><circle cx="500.8" cy="225.2" r="0.9" fill="#c5c5c5" stroke="none"/><circle cx="504.4" cy="225.2" r="0.9" fill="#c5c5c5" stroke="none"/><circle cx="192.2" cy="11.2" r="1.05" fill="#a6a6a6" stroke="none"/><circle cx="195.8" cy="11.2" r="1.05" fill="#a6a6a6" stroke="none"/><circle cx="199.4" cy="11.2" r="1.05" fill="#a6a6a6" stroke="none"/><g stroke="#a8a8a8" stroke-width=".95"><path d="M143.400 52.200l3.300 3.300-3.300 3.300M206 52.200l3.300 3.300-3.300 3.300"/></g><g stroke="#c5c5c5" stroke-width=".8"><circle cx="90.4" cy="73.6" r="2.3"/><path d="M90.4 68.6v2.7M90.4 75.9v2.7"/><circle cx="325.4" cy="73.6" r="2.3"/><path d="M325.4 68.6v2.7M325.4 75.9v2.7"/></g><g stroke="#858585" stroke-width="1.05"><path d="M13.2 34.8v-3.2h7.4l4.2 4.2v8.4h-5"/><path d="M20.4 31.8v4.2h4.2"/><path d="M9.2 35.2h7.2l3.2 3.2v9.4h-10.4z" /><circle cx="19.7" cy="71" r="5.6"/><path d="M15.8 75.2l-5.6 6.6"/><circle cx="13.6" cy="102.6" r="2.3"/><circle cx="21.4" cy="105.8" r="2.3"/><circle cx="13.6" cy="114.6" r="2.3"/><path d="M13.6 105v7.2M21.4 108.2c0 3.4-3 4-5.6 5"/><path d="M14.800 141v-5.600l10.600 6.800-7.600 4.900"/><ellipse cx="12.800" cy="147.600" rx="2.300" ry="2.900"/><path d="M10.800 145.600h4M8.600 145.200l1.900 1.200M8.400 148h2.100M8.600 150.800l1.900-1.200M17 145.200l-1.900 1.200M17.200 148h-2.100M17 150.800l-1.900-1.200"/><path d="M9.200 174.100h6.200v6.200h6.200v6.200h-12.400zM9.200 180.300h6.200v6.200"/><rect x="19.100" y="170.200" width="6.200" height="6.200" rx=".5"/><circle cx="17.4" cy="410.2" r="8"/><circle cx="17.4" cy="407.4" r="3"/><path d="M11.6 415.600c.8-3 3-4.600 5.800-4.600s5 1.600 5.800 4.600"/></g><path d="M26.0 443.5L26.0 446.1L23.7 446.5L23.1 448.0L24.4 450.0L22.6 451.8L20.6 450.5L19.1 451.1L18.7 453.4L16.1 453.4L15.7 451.1L14.2 450.5L12.2 451.8L10.4 450.0L11.7 448.0L11.1 446.5L8.8 446.1L8.8 443.5L11.1 443.1L11.7 441.6L10.4 439.6L12.2 437.8L14.2 439.1L15.7 438.5L16.1 436.2L18.7 436.2L19.1 438.5L20.6 439.1L22.6 437.8L24.4 439.6L23.1 441.6L23.7 443.1z" stroke="#858585" stroke-width="1.150"/><circle cx="17.4" cy="444.8" r="2.600" stroke="#858585" stroke-width="1.150"/><circle cx="23" cy="44.6" r="5.7" fill="#0a7ad1" stroke="none"/><circle cx="22.4" cy="114.4" r="6" fill="#0a7ad1" stroke="none"/><text x="23" y="46.9" font-family="Liberation Sans, sans-serif" font-weight="bold" font-size="6.4" fill="#fff" stroke="none" text-anchor="middle">1</text><text x="22.4" y="116.7" font-family="Liberation Sans, sans-serif" font-weight="bold" font-size="6.4" fill="#fff" stroke="none" text-anchor="middle">40</text><g stroke="#fff" stroke-width=".85"><path d="M8.800 468.800l3.800 2.200-3.800 2.200M16.200 465.400l-3.800 2.200 3.800 2.200"/><circle cx="33.6" cy="466.2" r="1.3"/><circle cx="33.6" cy="473.4" r="1.3"/><circle cx="37.8" cy="467.6" r="1.3"/><path d="M33.6 467.6v4.4M37.8 469c0 1.8-2 2.2-3.8 2.6"/><path d="M79.600 472.600h-.900a2.100 2.100 0 0 1-.3-4.100 3 3 0 0 1 5.800 0 2.100 2.100 0 0 1-.3 4.100h-.900M81.300 473.400v-3.800M79.900 470.800l1.400-1.400 1.400 1.400"/><circle cx="102.6" cy="469.8" r="4.3"/><path d="M100.800 468l3.600 3.600M104.400 468l-3.600 3.600"/><path d="M126.600 465.600l4.500 8.200h-9zM126.600 468.600v2.600M126.600 472.300v.2"/><path d="M501.200 472.400h7.400c-1.200-1-1.200-2-1.200-4a2.500 2.500 0 0 0-5 0c0 2 0 3-1.200 4zM504 473.400a1 1 0 0 0 1.800 0"/></g></svg><div class="edge-t"></div><div class="edge-l"></div><div class="edge-b"></div><div class="edge-r"></div></div>
</body></html>
